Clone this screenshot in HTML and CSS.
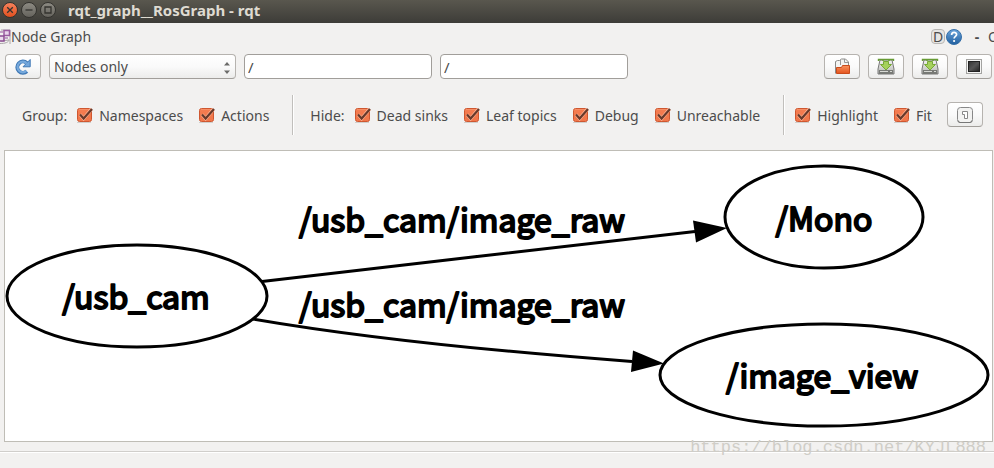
FILE: index.html
```html
<!DOCTYPE html>
<html lang="en">
<head>
<meta charset="utf-8">
<title>rqt_graph__RosGraph - rqt</title>
<link rel="stylesheet" href="styles.css">
</head>
<body>
<svg class="defs" aria-hidden="true">
  <defs>
    <linearGradient id="tick-bg" x1="0" y1="0" x2="0" y2="1"><stop offset="0" stop-color="#f9a27e"/><stop offset=".15" stop-color="#f47c50"/><stop offset="1" stop-color="#f0764a"/></linearGradient>
    <linearGradient id="folder-bg" x1="0" y1="0" x2="0" y2="1"><stop offset="0" stop-color="#f9935f"/><stop offset="1" stop-color="#e4531c"/></linearGradient>
    <linearGradient id="help-bg" x1="0" y1="0" x2="0" y2="1"><stop offset="0" stop-color="#6ca6dc"/><stop offset="1" stop-color="#215f9f"/></linearGradient>
    <linearGradient id="drive-bg" x1="0" y1="0" x2="0" y2="1"><stop offset="0" stop-color="#f4f4f2"/><stop offset="1" stop-color="#b5b7b3"/></linearGradient>
    <linearGradient id="screen-bg" x1="0" y1="0" x2="1" y2="1"><stop offset="0" stop-color="#333"/><stop offset=".5" stop-color="#555"/><stop offset="1" stop-color="#222"/></linearGradient>
    <symbol id="tick" viewBox="0 0 18 18">
      <rect x="1" y="16" width="14" height="1" fill="#d0cecb"/>
      <rect x="1.5" y="2.5" width="14" height="13" rx="2" fill="url(#tick-bg)" stroke="#cf5730"/>
      <path d="M4 8.5l3.6 4.2L15.6 3" fill="none" stroke="#ffb89b" stroke-width="3.4"/>
      <path d="M4 8.5l3.6 4L16 3" fill="none" stroke="#68392a" stroke-width="2.2"/>
    </symbol>
    <symbol id="save" viewBox="0 0 18 18">
      <path d="M3 2h12l2 9v5H1v-5z" fill="url(#drive-bg)" stroke="#777"/>
      <path d="M2 12h14v4H2z" fill="#777975"/>
      <path d="M3 13.5h8M13 13.5h2" stroke="#d7d9d4"/>
      <path d="M1.5 3V1.500h15V3M6 1v2M12 1v2" fill="none" stroke="#679b34" stroke-width="1.4"/>
      <path d="M6.500 3.500h5v3h3L9 12 3.500 6.500h3z" fill="#a5d15c" stroke="#77a936"/>
    </symbol>
  </defs>
</svg>

<div class="window">
  <header class="titlebar">
    <button class="win-btn win-close" aria-label="Close"><svg viewBox="0 0 14 14"><path d="M4.200 4.200l5.600 5.600M9.800 4.200l-5.600 5.600"/></svg></button>
    <button class="win-btn" aria-label="Minimize"><svg viewBox="0 0 14 14"><path d="M3.500 7h7"/></svg></button>
    <button class="win-btn" aria-label="Maximize"><svg viewBox="0 0 14 14"><path d="M4 4h6v6H4z"/></svg></button>
    <h1 class="title">rqt_graph__RosGraph - rqt</h1>
  </header>

  <div class="dockbar">
    <svg class="dock-icon" viewBox="0 0 11 16" aria-hidden="true">
      <path d="M0 14.500c5 0 9-1 9-4M1 12l8-1M1 1h9v14" fill="none" stroke="#aaa6a8"/>
      <rect x="4" y="1.500" width="5.500" height="5" fill="#e8d4ea" stroke="#995ba0" stroke-width="1.500"/>
      <rect x="-2" y="7" width="6" height="5" fill="#ead9ec" stroke="#8b4b92" stroke-width="1.500"/>
      <path d="M0 3h3M5 9h3" stroke="#b184b5" stroke-width="1.500"/>
    </svg>
    <h2 class="dock-title">Node Graph</h2>
    <button class="dock-btn dock-d" aria-label="Reload">D</button>
    <button class="dock-btn" aria-label="Help">
      <svg class="help" viewBox="0 0 16 16"><circle cx="8" cy="8" r="7.500" fill="url(#help-bg)" stroke="#356fa8"/><path d="M5.600 6c0-3.400 5-3.200 5-.5 0 1.800-2.500 1.900-2.500 4" fill="none" stroke="#fff" stroke-width="1.700"/><circle cx="8.100" cy="12" r="1.100" fill="#fff"/></svg>
    </button>
    <button class="dock-btn dock-min">-</button>
    <button class="dock-btn dock-close">O</button>
  </div>

  <div class="toolbar">
    <button class="tool" aria-label="Refresh graph">
      <svg viewBox="0 0 18 18"><path d="M12.800 13.200A5.600 5.600 0 1 1 12.700 5" fill="none" stroke="#3f78b5" stroke-width="4"/><path d="M16.200 1.500v7.300H9z" fill="#73a7dc" stroke="#3f78b5"/><path d="M12.400 12.900A5.300 5.300 0 1 1 12.800 5.500" fill="none" stroke="#76a9dc" stroke-width="2.200"/></svg>
    </button>
    <div class="combo">
      <select aria-label="Graph type"><option>Nodes only</option></select>
      <svg viewBox="0 0 8 14" aria-hidden="true"><path d="M4 1l3 3.500H1zM4 13l3-3.500H1z" fill="#6b6b69"/></svg>
    </div>
    <input class="filter" type="text" value="/" aria-label="Node filter">
    <input class="filter" type="text" value="/" aria-label="Topic filter">
    <div class="actions">
      <button class="tool" aria-label="Load dot file">
        <svg viewBox="0 0 18 18"><path d="M2.500 15.500V3.500l2-1h2l2-1.500h4l3 3v5" fill="#f4f4f2" stroke="#8a8a88"/><path d="M7.500 2v5M11.500 1v3.500H15" fill="none" stroke="#999"/><path d="M3.500 15.500v-6h5l1-2h7v8z" fill="url(#folder-bg)" stroke="#c94b1b"/></svg>
      </button>
      <button class="tool" aria-label="Save as dot"><svg viewBox="0 0 18 18"><use href="#save"/></svg></button>
      <button class="tool" aria-label="Save as SVG"><svg viewBox="0 0 18 18"><use href="#save"/></svg></button>
      <button class="tool" aria-label="Save as image">
        <svg viewBox="0 0 18 18"><rect x="1.500" y="1.500" width="15" height="14" fill="#f5f5f4" stroke="#a3a3a1"/><rect x="3.500" y="3.500" width="11" height="10" fill="url(#screen-bg)" stroke="#222"/></svg>
      </button>
    </div>
  </div>

  <div class="options">
    <span>Group:</span>
    <label class="check"><input type="checkbox" checked><svg><use href="#tick"/></svg>Namespaces</label>
    <label class="check"><input type="checkbox" checked><svg><use href="#tick"/></svg>Actions</label>
    <i class="rule"></i>
    <span>Hide:</span>
    <label class="check"><input type="checkbox" checked><svg><use href="#tick"/></svg>Dead sinks</label>
    <label class="check"><input type="checkbox" checked><svg><use href="#tick"/></svg>Leaf topics</label>
    <label class="check"><input type="checkbox" checked><svg><use href="#tick"/></svg>Debug</label>
    <label class="check"><input type="checkbox" checked><svg><use href="#tick"/></svg>Unreachable</label>
    <i class="rule"></i>
    <label class="check"><input type="checkbox" checked><svg><use href="#tick"/></svg>Highlight</label>
    <label class="check"><input type="checkbox" checked><svg><use href="#tick"/></svg>Fit</label>
    <button class="tool" aria-label="Fit in view">
      <svg viewBox="0 0 18 18"><rect x="1.500" y="1.500" width="15" height="15" rx="3" fill="#f3f3f2" stroke="#888"/><path d="M2 14.500q0 2 2 2h10q2 0 2-2" fill="none" stroke="#777"/><path d="M6.500 5.500h5v7h-3v-4h-2z" fill="#fff" stroke="#888"/></svg>
    </button>
  </div>

  <main class="graph">
    <svg viewBox="0 0 987 290" role="img" aria-label="ROS node graph">
      <g class="node">
        <ellipse cx="132" cy="145" rx="130" ry="51"/>
        <ellipse cx="819" cy="66" rx="99" ry="51"/>
        <ellipse cx="819" cy="224" rx="164" ry="51"/>
      </g>
      <g class="edge">
        <path d="M257 130.500C390 115 560 95 690 80.500"/>
        <path d="M248 168C370 189 500 201 627 210.500"/>
      </g>
      <g class="arrow">
        <path d="M688 69.500L722 77 691 91.500z"/>
        <path d="M628 199.500L659 212.500 626 221z"/>
      </g>
      <g class="name">
        <text x="131" y="158">/usb_cam</text>
        <text x="819" y="80">/Mono</text>
        <text x="817" y="237">/image_view</text>
        <text x="457" y="81">/usb_cam/image_raw</text>
        <text x="457" y="166">/usb_cam/image_raw</text>
      </g>
    </svg>
  </main>

  <footer class="status"><span class="mark">https://blog.csdn.net/KYJL888</span></footer>
</div>
</body>
</html>
```

FILE: styles.css
```css
* { box-sizing: border-box; }

body {
  margin: 0;
  background: #f2f1f0;
  color: #4c4c4c;
  font: 14px/20px "Noto Sans", "Open Sans", sans-serif;
  overflow: hidden;
}

button, input, select { font: inherit; color: inherit; margin: 0; padding: 0; }
h1, h2 { margin: 0; font-size: inherit; }
.defs { position: absolute; width: 0; height: 0; }

.window { display: flex; flex-direction: column; min-height: 100vh; }

.titlebar {
  display: flex;
  align-items: center;
  gap: 3px;
  height: 23px;
  padding: 0 2px 4px;
  background: linear-gradient(#59574e, #3d3c38);
}
.win-btn {
  width: 16px;
  height: 16px;
  border: 1px solid #34332f;
  border-radius: 50%;
  background: linear-gradient(#8c8a82, #65635d);
}
.win-close { background: linear-gradient(#f6825c, #e2501f); }
.win-btn svg { display: block; width: 100%; height: 100%; fill: none; stroke: #34332f; stroke-width: 1.3; }
.title { margin-left: 9px; color: #dfdbd2; font-size: 15px; font-weight: 700; white-space: nowrap; }

.dockbar { display: flex; align-items: center; height: 27px; }
.dock-icon { width: 11px; height: 16px; }
.dock-title { flex: 1; font-weight: 400; }
.dock-btn { border: 0; background: none; height: 16px; line-height: 16px; }
.dock-d { width: 14px; height: 15px; border: 1px solid #b9b7b4; border-radius: 4px; background: #e6e5e3; line-height: 13px; }
.help { display: block; width: 16px; height: 16px; margin-left: 1px; }
.dock-min { width: 6px; margin-left: 12px; font-weight: 700; }
.dock-close { width: 6px; margin-left: 8px; overflow: hidden; text-align: left; display: block; }

.toolbar { display: flex; gap: 8px; padding: 4px 2px 0 5px; }
.tool {
  display: flex;
  flex: none;
  align-items: center;
  justify-content: center;
  width: 36px;
  height: 25px;
  border: 1px solid #b6b3af;
  border-bottom-color: #a19e9a;
  border-radius: 4px;
  background: linear-gradient(#fff, #fafafa 50%, #ececeb);
}
.tool svg { flex: none; width: 18px; height: 18px; }
.combo { position: relative; flex: 0 1 187px; }
.combo select {
  appearance: none;
  width: 100%;
  height: 25px;
  padding: 0 20px 0 4px;
  border: 1px solid #b6b3af;
  border-bottom-color: #a19e9a;
  border-radius: 4px;
  background: linear-gradient(#fff, #fafafa 50%, #ececeb);
}
.combo svg { position: absolute; right: 5px; top: 7px; width: 8px; height: 14px; }
.filter {
  flex: 0 1 188px;
  min-width: 0;
  height: 25px;
  padding: 0 3px;
  border: 1px solid #a19e9a;
  border-radius: 4px;
  background: #fff;
  font-size: 15px;
}
.actions { display: flex; gap: 8px; margin-left: auto; }

.options { display: flex; align-items: center; height: 71px; padding: 0 11px 0 22px; white-space: nowrap; }
.options span, .check { padding-top: 2px; }
.check { display: flex; align-items: center; position: relative; margin-left: 16px; }
.check input { appearance: none; width: 15px; height: 15px; margin-right: 7px; }
.check svg { position: absolute; left: -1px; top: 2px; width: 18px; height: 18px; pointer-events: none; }
.options span + .check { margin-left: 10px; }
.rule { flex: none; width: 2px; height: 40px; margin: 0 16px 0 23px; background: #c1bfbc; border-right: 1px solid #fff; }
.rule + .check { margin-left: -6px; }
.options .tool { margin-left: auto; }

.graph { margin: 0 1px 0 4px; border: 1px solid #bfbdb6; background: #fff; }
.graph svg { display: block; width: 100%; height: auto; }
.node { fill: none; stroke: #000; stroke-width: 3; }
.edge { fill: none; stroke: #000; stroke-width: 3; }
.name {
  font-family: "Noto Sans CJK SC", sans-serif;
  font-size: 32px;
  text-anchor: middle;
  stroke: #000;
  stroke-width: 2;
  stroke-linejoin: round;
}

.status { position: relative; margin-top: 9px; flex: 1; border-top: 1px solid #d0cecb; box-shadow: inset 0 1px #fff; }
.mark {
  position: absolute;
  right: 8px;
  top: -14px;
  color: #cfcdc7;
  font-family: "Liberation Mono", monospace;
  font-size: 17px;
}
```
